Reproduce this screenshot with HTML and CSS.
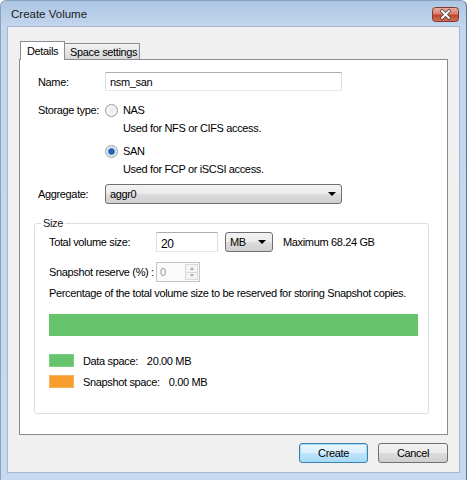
FILE: index.html
```html
<!DOCTYPE html>
<html>
<head>
<meta charset="utf-8">
<link rel="stylesheet" href="styles.css">
</head>
<body>
<div class="window">
  <div class="titlebar">
    <span class="title">Create Volume</span>
    <span class="close">
      <svg width="27" height="15" viewBox="0 0 27 15">
        <defs>
          <linearGradient id="cg" x1="0" y1="0" x2="0" y2="1">
            <stop offset="0" stop-color="#ebb0a3"/>
            <stop offset="0.45" stop-color="#d7806e"/>
            <stop offset="0.55" stop-color="#c2452f"/>
            <stop offset="1" stop-color="#d4735f"/>
          </linearGradient>
        </defs>
        <rect x="0.5" y="0.5" width="26" height="14" rx="3" fill="url(#cg)" stroke="#7b3b31"/>
        <path d="M10 4 L17 11 M17 4 L10 11" stroke="#4a3a38" stroke-width="3.6" stroke-linecap="round"/>
        <path d="M10 4 L17 11 M17 4 L10 11" stroke="#ffffff" stroke-width="2" stroke-linecap="round"/>
      </svg>
    </span>
  </div>
  <div class="client">
    <div class="tabs">
      <div class="tab active">Details</div>
      <div class="tab">Space settings</div>
    </div>
    <div class="panel">
      <div class="row name-row">
        <span class="lbl">Name:</span>
        <div class="textbox wide">nsm_san</div>
      </div>
      <div class="row storage-row">
        <span class="lbl tall">Storage type:</span>
        <div class="radios">
          <div class="opt">
            <span class="radio"></span>
            <div class="opt-text">
              <div class="line">NAS</div>
              <div class="line">Used for NFS or CIFS access.</div>
            </div>
          </div>
          <div class="opt second">
            <span class="radio checked"></span>
            <div class="opt-text">
              <div class="line">SAN</div>
              <div class="line">Used for FCP or iSCSI access.</div>
            </div>
          </div>
        </div>
      </div>
      <div class="row agg-row">
        <span class="lbl">Aggregate:</span>
        <div class="combo wide"><span>aggr0</span><span class="arrow"></span></div>
      </div>
      <fieldset class="group">
        <legend>Size</legend>
        <div class="grow">
          <span class="glbl w1">Total volume size:</span>
          <div class="textbox size-box">20</div>
          <div class="combo unit"><span>MB</span><span class="arrow"></span></div>
          <span class="max">Maximum 68.24 GB</span>
        </div>
        <div class="grow snap-row">
          <span class="glbl w2">Snapshot reserve (%) :</span>
          <div class="spinner">
            <span class="spin-val">0</span>
            <span class="spin-btns">
              <span class="spin-up"></span>
              <span class="spin-down"></span>
            </span>
          </div>
        </div>
        <div class="note">Percentage of the total volume size to be reserved for storing Snapshot copies.</div>
        <div class="bar"><div class="bar-fill" style="width:100%"></div></div>
        <div class="legend-row first">
          <span class="swatch green"></span>
          <span>Data space:</span>
          <span class="val">20.00 MB</span>
        </div>
        <div class="legend-row">
          <span class="swatch orange"></span>
          <span>Snapshot space:</span>
          <span class="val">0.00 MB</span>
        </div>
      </fieldset>
    </div>
    <div class="buttons">
      <div class="btn default">Create</div>
      <div class="btn cancel">Cancel</div>
    </div>
  </div>
</div>
</body>
</html>
```
FILE: styles.css
```css
* { box-sizing: border-box; }
html, body { margin: 0; padding: 0; }
body {
  width: 468px;
  height: 480px;
  background: #ffffff;
  font-family: "Liberation Sans", Arial, sans-serif;
  font-size: 11px;
  letter-spacing: -0.35px;
  color: #000;
  overflow: hidden;
  white-space: nowrap;
}
.window {
  width: 467px;
  height: 480px;
  display: flex;
  flex-direction: column;
  padding: 0 6px 7px 6px;
  border-left: 1px solid #8aa1bb;
  border-right: 1px solid #5f7792;
  border-top: 1px solid #8aa1bb;
  border-radius: 6px 6px 0 0;
  background: linear-gradient(#adc6e3 0px, #c2d6ed 25px, #c5d9ef 100%);
}
.titlebar {
  height: 25px;
  display: flex;
  align-items: flex-start;
  justify-content: space-between;
}
.title {
  margin-left: 4px;
  margin-top: 7px;
  font-size: 11.5px;
  letter-spacing: 0;
  color: #1b1b1b;
}
.close {
  display: block;
  width: 27px;
  height: 15px;
  margin-top: 6px;
  margin-right: 1px;
}
.close svg { display: block; }
.client {
  flex: 1;
  background: #f0f0f0;
  border: 1px solid #a5b8cf;
  padding: 14px 11px 0 11px;
  display: flex;
  flex-direction: column;
}
.tabs {
  display: flex;
  align-items: flex-end;
  height: 18px;
  padding-left: 1px;
  position: relative;
  z-index: 1;
}
.tab {
  height: 16px;
  border: 1px solid #898c95;
  border-bottom: none;
  background: linear-gradient(#f3f3f3, #e5e5e5 50%, #d9d9d9);
  padding: 2px 0 0 4px;
  line-height: 13px;
  width: 75px;
}
.tab.active {
  height: 19px;
  margin-bottom: -1px;
  background: #ffffff;
  width: 45px;
  padding: 3px 0 0 6px;
  position: relative;
  z-index: 2;
}
.tab.active + .tab { border-left: none; width: 75px; padding-left: 5px; }
.panel {
  height: 376px;
  background: #ffffff;
  border: 1px solid #898c95;
  padding: 12px 0 0 14px;
}
.row {
  display: flex;
  align-items: center;
  padding-left: 4px;
}
.lbl {
  width: 67px;
  flex: none;
}
.lbl.tall { align-self: flex-start; line-height: 18px; }
.textbox {
  height: 19px;
  background: #fff;
  border: 1px solid #abadb3;
  border-left-color: #dbdfe6;
  border-right-color: #dbdfe6;
  border-bottom-color: #e3e9ef;
  padding: 2px 0 0 4px;
  line-height: 14px;
}
.wide { width: 237px; }
.storage-row { margin-top: 10px; align-items: flex-start; }
.radios { display: flex; flex-direction: column; }
.opt { display: flex; align-items: flex-start; }
.opt.second { margin-top: 5px; }
.opt-text .line { line-height: 18px; }
.radio {
  width: 13px;
  height: 13px;
  margin-top: 3px;
  margin-right: 5px;
  border-radius: 50%;
  border: 1px solid #9a9c9d;
  background: radial-gradient(circle at 50% 50%, #e9e9e9 0, #f6f6f6 55%, #dcdcdc 100%);
  flex: none;
}
.radio.checked {
  background: radial-gradient(circle at 50% 50%, #2a6bc0 0, #1d58a8 2.5px, #a6c8ea 3.5px, #eef2f6 5px, #d8d8d8 100%);
}
.agg-row { margin-top: 6px; }
.combo {
  height: 20px;
  border: 1px solid #707070;
  border-radius: 3px;
  background: linear-gradient(#f2f2f2 0%, #ebebeb 50%, #dddddd 51%, #cfcfcf 100%);
  display: flex;
  align-items: center;
  justify-content: space-between;
  padding: 0 5px 0 4px;
}
.arrow {
  width: 0;
  height: 0;
  border-left: 4px solid transparent;
  border-right: 4px solid transparent;
  border-top: 4px solid #000;
}
.group {
  margin: 12px 0 0 0;
  width: 395px;
  min-width: 0;
  border: 1px solid #d5dfe5;
  border-radius: 3px;
  padding: 2px 14px 25px 14px;
}
.group legend {
  padding: 0 2px;
  margin-left: -8px;
  line-height: 14px;
  color: #1a1a1a;
}
.grow { display: flex; align-items: center; }
.glbl { flex: none; }
.w1 { width: 107px; }
.w2 { width: 107px; }
.size-box { width: 62px; height: 20px; padding-top: 4px; font-size: 12px; }
.unit { width: 48px; margin-left: 7px; padding-right: 6px; }
.max { margin-left: 10px; }
.snap-row { margin-top: 10px; }
.spinner {
  width: 44px;
  height: 20px;
  border: 1px solid #c5c5c5;
  background: #fafafa;
  display: flex;
  justify-content: space-between;
  padding: 1px 1px 1px 3px;
}
.spin-val { color: #9a9a9a; line-height: 16px; }
.spin-btns {
  width: 13px;
  display: flex;
  flex-direction: column;
  border: 1px solid #d9d9d9;
  background: #f4f4f4;
}
.spin-up, .spin-down {
  flex: 1;
  display: flex;
  align-items: center;
  justify-content: center;
}
.spin-down { border-top: 1px solid #d9d9d9; }
.spin-up::after, .spin-down::after {
  content: "";
  width: 0;
  height: 0;
  border-left: 2.5px solid transparent;
  border-right: 2.5px solid transparent;
}
.spin-up::after { border-bottom: 3px solid #a8a8a8; }
.spin-down::after { border-top: 3px solid #a8a8a8; }
.note { margin-top: 4px; line-height: 14px; }
.bar {
  margin-top: 14px;
  width: 369px;
  height: 22px;
  background: #eaeaea;
}
.bar-fill { height: 100%; background: #65c36b; }
.legend-row {
  display: flex;
  align-items: center;
  height: 13px;
  margin-top: 8px;
}
.legend-row.first { margin-top: 18px; }
.swatch { width: 25px; height: 13px; margin-right: 9px; flex: none; }
.green { background: #66c46c; border: 1px solid #7ccf81; }
.orange { background: #f69d2c; border: 1px solid #f8b25c; }
.val { margin-left: 9px; }
.buttons {
  display: flex;
  justify-content: flex-end;
  margin-top: 8px;
  gap: 10px;
}
.btn {
  height: 20px;
  border: 1px solid #707070;
  border-radius: 3px;
  background: linear-gradient(#f2f2f2 0%, #ebebeb 50%, #dddddd 51%, #cfcfcf 100%);
  text-align: center;
  line-height: 18px;
}
.btn.default {
  width: 69px;
  border-color: #3c7fb1;
  box-shadow: inset 0 0 0 1px #a6dcf4;
  background: linear-gradient(#eaf6fd 0%, #d9f0fc 50%, #bee6fd 51%, #a7d9f5 100%);
}
.btn.cancel { width: 70px; }
```
